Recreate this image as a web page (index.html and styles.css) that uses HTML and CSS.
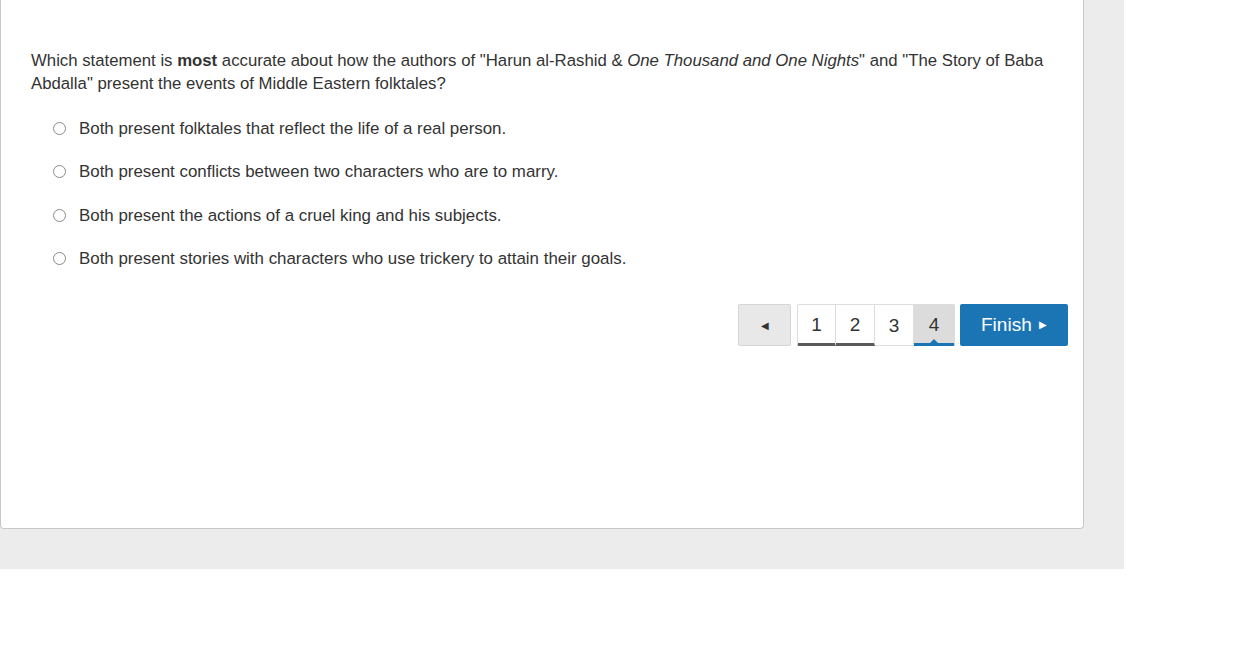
FILE: index.html
```html
<!DOCTYPE html>
<html lang="en">
<head>
  <meta charset="UTF-8">
  <title>Question 4</title>
  <link rel="stylesheet" href="styles.css">
</head>
<body>
  <div class="stage">
    <div class="card">
      <p class="question">Which statement is <strong>most</strong> accurate about how the authors of "Harun al-Rashid &amp; <em>One Thousand and One Nights</em>" and "The Story of Baba Abdalla" present the events of Middle Eastern folktales?</p>

      <ul class="choices">
        <li><label><input type="radio" name="answer"> Both present folktales that reflect the life of a real person.</label></li>
        <li><label><input type="radio" name="answer"> Both present conflicts between two characters who are to marry.</label></li>
        <li><label><input type="radio" name="answer"> Both present the actions of a cruel king and his subjects.</label></li>
        <li><label><input type="radio" name="answer"> Both present stories with characters who use trickery to attain their goals.</label></li>
      </ul>

      <div class="pager">
        <button class="prev-btn">&#9664;</button>
        <div class="pages">
          <button class="page done">1</button>
          <button class="page done">2</button>
          <button class="page">3</button>
          <button class="page current">4</button>
        </div>
        <button class="finish-btn">Finish <span class="arrow">&#9654;</span></button>
      </div>
    </div>
  </div>
</body>
</html>
```

FILE: styles.css
```css
body {
  margin: 0;
  font-family: "Liberation Sans", Arial, sans-serif;
  color: #333;
  background: #fff;
}
.stage {
  width: 1124px;
  height: 569px;
  background: #ececec;
}
.card {
  width: 1084px;
  height: 529px;
  box-sizing: border-box;
  background: white;
  border: 1px solid #c8c8c8;
  border-top: none;
  border-radius: 0 0 4px 4px;
  padding: 49px 15px 0 30px;
}
.question {
  margin: 0;
  font-size: 16.75px;
  line-height: 23px;
}
.choices {
  list-style: none;
  margin: 22px 0 0 0;
  padding: 0 0 0 22px;
}
.choices li {
  font-size: 16.9px;
  line-height: 23px;
  margin-bottom: 20.4px;
}
.choices label {
  display: flex;
  align-items: center;
  gap: 13px;
}
.choices input {
  appearance: none;
  -webkit-appearance: none;
  width: 13px;
  height: 13px;
  margin: 0;
  border: 1px solid #8a8a8a;
  border-radius: 50%;
  background: white;
  flex: none;
}
.pager {
  display: flex;
  justify-content: flex-end;
  gap: 5px;
  margin-top: 34px;
}
.pager button {
  font-family: inherit;
  cursor: pointer;
}
.prev-btn {
  width: 53px;
  height: 42px;
  background: #e8e8e8;
  border: 1px solid #d6d6d6;
  border-radius: 2px;
  color: #333;
  font-size: 10px;
}
.pages {
  display: flex;
  margin-left: 1px;
}
.page {
  position: relative;
  width: 39px;
  height: 42px;
  background: white;
  border: 1px solid #ddd;
  border-left: none;
  font-size: 19px;
  color: #333;
  padding: 2px 0 0 0;
}
.page:first-child {
  border-left: 1px solid #ddd;
  border-radius: 2px 0 0 2px;
}
.page:last-child {
  width: 41px;
  border-radius: 0 2px 2px 0;
}
.page.done {
  border-bottom: 3px solid #5a5a5a;
}
.page.current {
  background: #dcdcdc;
  border-bottom: 3px solid #1b75b5;
}
.page.current::after {
  content: "";
  position: absolute;
  left: 50%;
  bottom: 0;
  margin-left: -4px;
  border-left: 4px solid transparent;
  border-right: 4px solid transparent;
  border-bottom: 4px solid #1b75b5;
}
.finish-btn {
  width: 108px;
  height: 42px;
  background: #1b75b5;
  border: none;
  border-radius: 2px;
  color: white;
  font-size: 19px;
}
.finish-btn .arrow {
  font-size: 10px;
  vertical-align: 3px;
  margin-left: 2px;
}
```
